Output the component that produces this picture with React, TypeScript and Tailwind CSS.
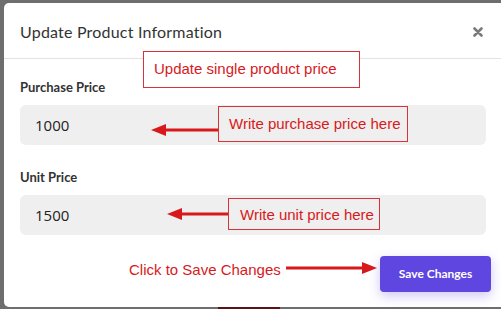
import React from 'react';

const red = '#d7191c';

function ArrowLeft({ x1, x2, y }: { x1: number; x2: number; y: number }) {
  // arrow pointing left, head at x2
  const w = x1 - x2;
  return (
    <svg className="absolute" style={{ left: x2, top: y - 7 }} width={w} height={14}>
      <line x1={12} y1={7} x2={w} y2={7} stroke={red} strokeWidth={3} />
      <polygon points="0,7 15,1 15,13" fill={red} />
    </svg>
  );
}

function ArrowRight({ x1, x2, y }: { x1: number; x2: number; y: number }) {
  const w = x2 - x1;
  return (
    <svg className="absolute" style={{ left: x1, top: y - 7 }} width={w} height={14}>
      <line x1={0} y1={7} x2={w - 12} y2={7} stroke={red} strokeWidth={3} />
      <polygon points={`${w},7 ${w - 15},1 ${w - 15},13`} fill={red} />
    </svg>
  );
}

function PriceField({ label, value, first }: { label: string; value: string; first?: boolean }) {
  return (
    <div className={first ? '' : 'mt-[22px]'}>
      <label className="block text-[13px] font-bold text-[#333] leading-5 mb-2">{label}</label>
      <div className="w-[466px] h-[40px] rounded-[6px] bg-[#efefef] flex items-center px-[15px] text-[15px] text-[#222] font-['Open_Sans',sans-serif]">
        {value}
      </div>
    </div>
  );
}

export default function App() {
  return (
    <div className="relative w-[501px] h-[309px] overflow-hidden bg-[#6e6e6e] pl-[4px] pt-[3px] font-['Lato','Open_Sans',sans-serif]">
      {/* Modal */}
      <div className="w-[510px] h-[304px] bg-white rounded-[5px]">
        <div className="flex items-center justify-between w-[497px] h-[56px] pl-4 pr-[18px] pt-[2px] border-b border-[#e3e3e3]">
          <h2 className="text-[16px] text-[#333] tracking-[0.2px] whitespace-nowrap">Update Product Information</h2>
          <svg width="10" height="10" viewBox="0 0 10 10">
            <path d="M1.5 1.5 L8.5 8.5 M8.5 1.5 L1.5 8.5" stroke="#7a7a7a" strokeWidth="2.6" strokeLinecap="round" />
          </svg>
        </div>

        <div className="px-4 pt-[18px]">
          <PriceField label="Purchase Price" value="1000" first />
          <PriceField label="Unit Price" value="1500" />

          <div className="flex justify-end w-[471px] pt-[21px]">
            <button className="w-[111px] h-[36px] rounded-[4px] bg-[#5f46e0] text-white text-[12px] font-bold shadow-[0_4px_12px_rgba(95,70,224,0.3)]">
              Save Changes
            </button>
          </div>
        </div>
      </div>

      {/* strip below modal */}
      <div className="absolute left-[218px] top-[307px] w-[62px] h-[2px] bg-[#5a1414]" />

      {/* Annotations */}
      <div className="absolute left-[143px] top-[51px] w-[217px] h-[37px] border border-[#d6343a] bg-white flex items-center pl-[10px] text-[15px] text-[#d7191c] font-['Liberation_Sans',Arial,sans-serif]">
        Update single product price
      </div>

      <div className="absolute left-[218px] top-[106px] w-[190px] h-[36px] border border-[#d6343a] bg-[#efefef] flex items-center pl-[10px] text-[15px] text-[#d7191c] font-['Liberation_Sans',Arial,sans-serif]">
        Write purchase price here
      </div>
      <ArrowLeft x1={218} x2={151} y={130} />

      <div className="absolute left-[228px] top-[198px] w-[152px] h-[32px] border border-[#d6343a] bg-[#efefef] flex items-end pb-[3px] pl-[11px] text-[15px] text-[#d7191c] font-['Liberation_Sans',Arial,sans-serif]">
        Write unit price here
      </div>
      <ArrowLeft x1={228} x2={167} y={214} />

      <div className="absolute left-[129px] top-[260px] text-[15px] leading-5 text-[#d7191c] font-['Liberation_Sans',Arial,sans-serif]">
        Click to Save Changes
      </div>
      <ArrowRight x1={286} x2={377} y={268} />
    </div>
  );
}
